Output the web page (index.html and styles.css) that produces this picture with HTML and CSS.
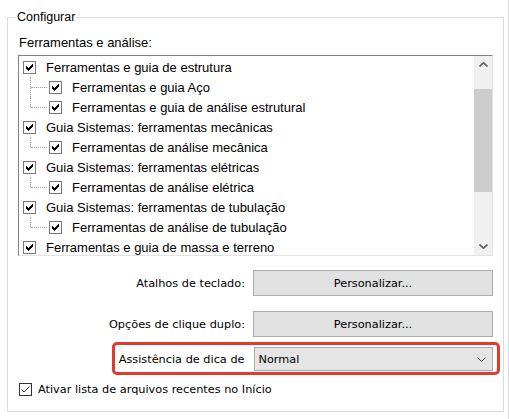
FILE: index.html
```html
<!DOCTYPE html>
<html lang="pt">
<head>
  <meta charset="UTF-8" />
  <title>Configurar</title>
  <link rel="stylesheet" href="styles.css">
</head>
<body>
  <div class="panel">
    <fieldset class="group">
      <legend>Configurar</legend>

      <div class="list-label">Ferramentas e análise:</div>
      <div class="listbox">
        <ul class="tree">
          <li class="node"><span class="cb"><svg viewBox="1 1 11 11"><path d="M3 5h1v3h-1zM4 6h1v3h-1zM5 7h1v3h-1zM6 6h1v3h-1zM7 5h1v3h-1zM8 4h1v3h-1zM9 3h1v3h-1z"/></svg></span>Ferramentas e guia de estrutura</li>
          <li class="node child"><span class="branch mid"></span><span class="cb"><svg viewBox="1 1 11 11"><path d="M3 5h1v3h-1zM4 6h1v3h-1zM5 7h1v3h-1zM6 6h1v3h-1zM7 5h1v3h-1zM8 4h1v3h-1zM9 3h1v3h-1z"/></svg></span>Ferramentas e guia Aço</li>
          <li class="node child"><span class="branch"></span><span class="cb"><svg viewBox="1 1 11 11"><path d="M3 5h1v3h-1zM4 6h1v3h-1zM5 7h1v3h-1zM6 6h1v3h-1zM7 5h1v3h-1zM8 4h1v3h-1zM9 3h1v3h-1z"/></svg></span>Ferramentas e guia de análise estrutural</li>
          <li class="node"><span class="cb"><svg viewBox="1 1 11 11"><path d="M3 5h1v3h-1zM4 6h1v3h-1zM5 7h1v3h-1zM6 6h1v3h-1zM7 5h1v3h-1zM8 4h1v3h-1zM9 3h1v3h-1z"/></svg></span>Guia Sistemas: ferramentas mecânicas</li>
          <li class="node child"><span class="branch"></span><span class="cb"><svg viewBox="1 1 11 11"><path d="M3 5h1v3h-1zM4 6h1v3h-1zM5 7h1v3h-1zM6 6h1v3h-1zM7 5h1v3h-1zM8 4h1v3h-1zM9 3h1v3h-1z"/></svg></span>Ferramentas de análise mecânica</li>
          <li class="node"><span class="cb"><svg viewBox="1 1 11 11"><path d="M3 5h1v3h-1zM4 6h1v3h-1zM5 7h1v3h-1zM6 6h1v3h-1zM7 5h1v3h-1zM8 4h1v3h-1zM9 3h1v3h-1z"/></svg></span>Guia Sistemas: ferramentas elétricas</li>
          <li class="node child"><span class="branch"></span><span class="cb"><svg viewBox="1 1 11 11"><path d="M3 5h1v3h-1zM4 6h1v3h-1zM5 7h1v3h-1zM6 6h1v3h-1zM7 5h1v3h-1zM8 4h1v3h-1zM9 3h1v3h-1z"/></svg></span>Ferramentas de análise elétrica</li>
          <li class="node"><span class="cb"><svg viewBox="1 1 11 11"><path d="M3 5h1v3h-1zM4 6h1v3h-1zM5 7h1v3h-1zM6 6h1v3h-1zM7 5h1v3h-1zM8 4h1v3h-1zM9 3h1v3h-1z"/></svg></span>Guia Sistemas: ferramentas de tubulação</li>
          <li class="node child"><span class="branch"></span><span class="cb"><svg viewBox="1 1 11 11"><path d="M3 5h1v3h-1zM4 6h1v3h-1zM5 7h1v3h-1zM6 6h1v3h-1zM7 5h1v3h-1zM8 4h1v3h-1zM9 3h1v3h-1z"/></svg></span>Ferramentas de análise de tubulação</li>
          <li class="node"><span class="cb"><svg viewBox="1 1 11 11"><path d="M3 5h1v3h-1zM4 6h1v3h-1zM5 7h1v3h-1zM6 6h1v3h-1zM7 5h1v3h-1zM8 4h1v3h-1zM9 3h1v3h-1z"/></svg></span>Ferramentas e guia de massa e terreno</li>
        </ul>
        <div class="scrollbar">
          <div class="sb-btn"><svg viewBox="0 0 9 5"><path d="M0.5 4.5 4.5 0.8 8.5 4.5"/></svg></div>
          <div class="sb-track"><div class="sb-thumb"></div></div>
          <div class="sb-btn"><svg viewBox="0 0 9 5"><path d="M0.5 0.5 4.5 4.2 8.5 0.5"/></svg></div>
        </div>
      </div>

      <!-- Options -->
      <div class="opts">
        <div class="opt-row">
          <label class="opt-label">Atalhos de teclado:</label>
          <button class="btn">Personalizar...</button>
        </div>
        <div class="opt-row">
          <label class="opt-label">Opções de clique duplo:</label>
          <button class="btn">Personalizar...</button>
        </div>
        <div class="opt-row highlight">
          <label class="opt-label">Assistência de dica de</label>
          <div class="combo">
            <span>Normal</span>
            <svg viewBox="0 0 9 5"><path d="M0.5 0.5 4.5 4.5 8.5 0.5"/></svg>
          </div>
        </div>
      </div>

      <label class="recent">
        <span class="cb-flat"><svg viewBox="0 0 11 11"><path d="M1.5 5.5 4 8 9.5 2.5"/></svg></span>
        Ativar lista de arquivos recentes no Início
      </label>
    </fieldset>
  </div>
</body>
</html>
```

FILE: styles.css
```css
body { margin: 0; background: #fff; color: #000; font-family: "DejaVu Sans", sans-serif; }

.panel { width: 509px; height: 419px; box-sizing: border-box; border-right: 1px solid #dcdcdc; overflow: hidden; }

.group {
  margin: 9px 0 0 7px;
  width: 497px;
  height: 403px;
  box-sizing: border-box;
  border: 1px solid #dcdcdc;
  padding: 0 10px 0 11px;
  min-width: 0;
}
.group legend {
  font: 12.5px/16px "Liberation Sans", Arial, sans-serif;
  padding: 0 1px;
  margin-left: -3px;
}

.list-label { font: 13px/16px "Liberation Sans", Arial, sans-serif; margin-top: 10px; }

/* List box */
.listbox {
  display: flex;
  width: 475px;
  height: 201px;
  box-sizing: border-box;
  margin: 4px 0 0 -1px;
  border: 1px solid;
  border-color: #828282 #e3e3e3 #e3e3e3 #828282;
  background: #fff;
}
.tree { flex: 1; list-style: none; margin: 0; padding: 1px 0 0; overflow: hidden; }
.node {
  display: flex;
  align-items: center;
  height: 20px;
  padding-left: 4px;
  white-space: nowrap;
  font: 13px "Liberation Sans", Arial, sans-serif;
}
.node.child { padding-left: 11px; }
.cb {
  flex: none;
  width: 13px;
  height: 13px;
  box-sizing: border-box;
  border: 1px solid #7a7a7a;
  background: #fff;
  margin-right: 10px;
}
.cb svg { display: block; width: 11px; height: 11px; fill: #000; shape-rendering: crispEdges; }

.branch { flex: none; position: relative; width: 19px; height: 20px; }
.branch::before {
  content: "";
  position: absolute;
  left: 0; top: 0;
  height: 10px;
  border-left: 1px dotted #a0a0a0;
}
.branch.mid::before { height: 20px; }
.branch::after {
  content: "";
  position: absolute;
  left: 1px; top: 10px;
  width: 16px;
  border-top: 1px dotted #a0a0a0;
}

/* Scrollbar */
.scrollbar { flex: none; width: 18px; display: flex; flex-direction: column; background: #f0f0f0; }
.sb-btn { height: 17px; display: flex; align-items: center; justify-content: center; }
.sb-btn svg { width: 9px; height: 5px; fill: none; stroke: #606060; stroke-width: 1.6; }
.sb-track { flex: 1; }
.sb-thumb { margin-top: 16px; height: 103px; background: #cdcdcd; }

/* Options */
.opts { margin-top: 14px; }
.opt-row { display: flex; align-items: center; margin-top: 15px; font-size: 11.3px; }
.opt-row:first-child { margin-top: 0; }
.opt-label { width: 234px; box-sizing: border-box; padding-right: 8px; text-align: right; }
.btn {
  width: 240px;
  height: 26px;
  margin: 0;
  border: 1px solid #adadad;
  background: #e1e1e1;
  font: 11.3px "DejaVu Sans", sans-serif;
  color: #000;
  padding: 0;
}
.highlight { position: relative; margin-top: 10px; }
.highlight::after {
  content: "";
  position: absolute;
  left: 93px; right: -7px; top: -5px; bottom: -4px;
  border: 3px solid #e23b2b;
  border-radius: 5px;
}
.combo {
  width: 240px;
  height: 24px;
  box-sizing: border-box;
  margin-left: 1px;
  display: flex;
  align-items: center;
  justify-content: space-between;
  padding: 0 6px 0 4px;
  border: 1px solid #acacac;
  background: #e5e5e5;
}
.combo svg { width: 9px; height: 5px; fill: none; stroke: #606060; stroke-width: 1; }

.recent { display: flex; align-items: center; margin: 12px 0 0 0; font-size: 11.3px; }
.cb-flat {
  width: 13px;
  height: 13px;
  box-sizing: border-box;
  border: 1px solid #333;
  background: #fff;
  margin-right: 6px;
}
.cb-flat svg { display: block; width: 11px; height: 11px; fill: none; stroke: #333; stroke-width: 1; }
```
